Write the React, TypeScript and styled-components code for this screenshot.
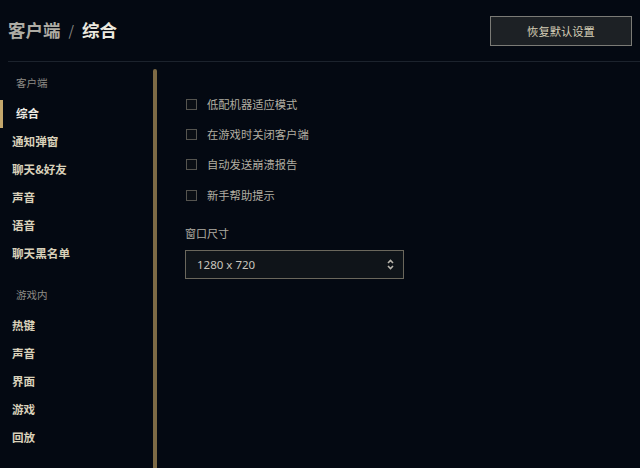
import React from "react";
import styled, { createGlobalStyle } from "styled-components";

const Global = createGlobalStyle`
  html, body { margin: 0; padding: 0; background: #040912; }
  body { font-family: "Noto Sans CJK SC", "Noto Sans", sans-serif; }
  * { box-sizing: border-box; }
`;

const Page = styled.div`
  width: 640px;
  height: 468px;
  background: #040912;
  display: flex;
  flex-direction: column;
  overflow: hidden;
`;

const Header = styled.header`
  height: 62px;
  margin-left: 8px;
  padding-right: 8px;
  border-bottom: 1px solid #1c232d;
  display: flex;
  align-items: center;
  justify-content: space-between;
`;

const Title = styled.h1`
  margin: 0;
  font-size: 17.5px;
  font-weight: 700;
  line-height: 1;
  display: flex;
  align-items: center;
  gap: 8px;
  color: #e6e3da;
  padding-bottom: 1px;
`;

const Crumb = styled.span<{ $dim?: boolean }>`
  color: ${(p) => (p.$dim ? "#aeaca4" : "#ebe8df")};
`;

const Slash = styled.span`
  color: #8b8a86;
  font-weight: 400;
  font-size: 14px;
`;

const ResetButton = styled.button`
  width: 142px;
  height: 30px;
  margin-top: 1px;
  background: #1d2125;
  border: 1px solid #7b7b76;
  color: #d6cfb7;
  font-family: inherit;
  font-size: 11.3px;
  padding: 0;
  cursor: pointer;
`;

const Body = styled.div`
  flex: 1;
  display: flex;
  min-height: 0;
`;

const Sidebar = styled.aside`
  width: 157px;
  display: flex;
`;

const Nav = styled.nav`
  flex: 1;
  padding-top: 7px;
  display: flex;
  flex-direction: column;
`;

const SectionLabel = styled.div<{ $gap?: number }>`
  height: 28px;
  line-height: 28px;
  padding-left: 16px;
  margin-top: ${(p) => p.$gap ?? 0}px;
  margin-bottom: 2px;
  font-size: 10.5px;
  color: #8e8c86;
`;

const NavItem = styled.div<{ $active?: boolean }>`
  position: relative;
  height: 28px;
  line-height: 28px;
  padding-left: ${(p) => (p.$active ? 16 : 12)}px;
  font-size: 11.6px;
  font-weight: 700;
  color: ${(p) => (p.$active ? "#efece4" : "#d9d1ba")};
  &::before {
    content: "";
    display: ${(p) => (p.$active ? "block" : "none")};
    position: absolute;
    left: 0;
    top: 1px;
    width: 3px;
    height: 28px;
    background: #c4a76c;
  }
`;

const ScrollThumb = styled.div`
  width: 4px;
  margin-top: 7px;
  background: #7d6a45;
  border-radius: 2px 2px 0 0;
`;

const Content = styled.main`
  flex: 1;
  padding: 27px 0 0 28px;
  display: flex;
  flex-direction: column;
`;

const CheckRow = styled.label`
  height: 30px;
  display: flex;
  align-items: center;
  gap: 10px;
  font-size: 11.3px;
  color: #b2aea2;
  &:last-of-type {
    height: 31px;
    padding-top: 1px;
  }
`;

const Box = styled.span`
  width: 11px;
  height: 11px;
  margin-left: 1px;
  border: 1px solid #55544f;
  background: #0a0e14;
`;

const FieldLabel = styled.div`
  margin-top: 15px;
  height: 17px;
  line-height: 17px;
  font-size: 11px;
  color: #b0ada3;
`;

const Select = styled.div`
  margin-top: 8px;
  width: 219px;
  height: 29px;
  border: 1px solid #6a675c;
  background: #0f1419;
  display: flex;
  align-items: center;
  justify-content: space-between;
  padding: 0 9px 0 11px;
  font-size: 11.5px;
  color: #c9c6bd;
  font-family: "Noto Sans", sans-serif;
`;

const Arrows = () => (
  <svg width="7" height="11" viewBox="0 0 7 11" fill="none">
    <path d="M1 4 L3.5 1.5 L6 4" stroke="#b9b6ad" strokeWidth="1.6" />
    <path d="M1 7 L3.5 9.5 L6 7" stroke="#b9b6ad" strokeWidth="1.6" />
  </svg>
);

const clientItems = ["通知弹窗", "聊天&好友", "声音", "语音", "聊天黑名单"];
const gameItems = ["热键", "声音", "界面", "游戏", "回放"];
const options = ["低配机器适应模式", "在游戏时关闭客户端", "自动发送崩溃报告", "新手帮助提示"];

export default function App() {
  return (
    <Page>
      <Global />
      <Header>
        <Title>
          <Crumb $dim>客户端</Crumb>
          <Slash>/</Slash>
          <Crumb>综合</Crumb>
        </Title>
        <ResetButton>恢复默认设置</ResetButton>
      </Header>
      <Body>
        <Sidebar>
          <Nav>
            <SectionLabel>客户端</SectionLabel>
            <NavItem $active>综合</NavItem>
            {clientItems.map((t) => (
              <NavItem key={t}>{t}</NavItem>
            ))}
            <SectionLabel $gap={14}>游戏内</SectionLabel>
            {gameItems.map((t, i) => (
              <NavItem key={t + i}>{t}</NavItem>
            ))}
          </Nav>
          <ScrollThumb />
        </Sidebar>
        <Content>
          {options.map((o) => (
            <CheckRow key={o}>
              <Box />
              {o}
            </CheckRow>
          ))}
          <FieldLabel>窗口尺寸</FieldLabel>
          <Select>
            <span>1280 x 720</span>
            <Arrows />
          </Select>
        </Content>
      </Body>
    </Page>
  );
}
